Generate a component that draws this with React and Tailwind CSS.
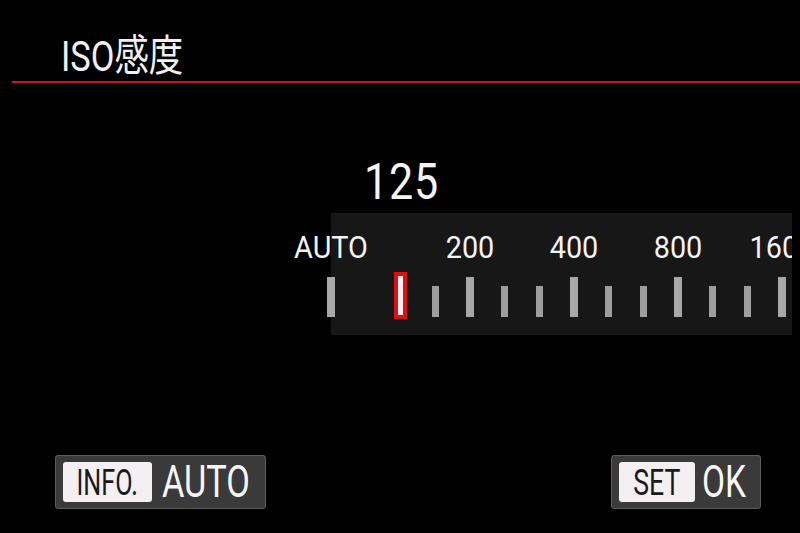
import React from 'react';

const font = { fontFamily: 'Roboto, "Noto Sans CJK JP", sans-serif' };

// ISO stops on the scale, tall = labelled stop
const stops = [
  { label: 'AUTO', tall: true },
  { hidden: true },
  { current: true },
  {},
  { label: '200', tall: true },
  {},
  {},
  { label: '400', tall: true },
  {},
  {},
  { label: '800', tall: true },
  {},
  {},
  { label: '1600', tall: true },
];

function Tick({ stop }) {
  if (stop.hidden) return <div className="w-[34.7px] shrink-0" />;
  if (stop.current) {
    return (
      <div className="w-[34.7px] shrink-0 flex justify-center">
        <div className="border-4 border-[#e01010] mt-[-5px]">
          <div className="w-[5px] h-[39px] bg-[#f4eef4]" />
        </div>
      </div>
    );
  }
  return (
    <div className="w-[34.7px] shrink-0 flex justify-center">
      {stop.tall ? (
        <div className="w-[8px] h-[40px] bg-[#a8a8a8]" />
      ) : (
        <div className="w-[7px] h-[31px] mt-[9px] bg-[#9e9e9e]" />
      )}
    </div>
  );
}

export default function App() {
  return (
    <div className="w-[800px] h-[533px] bg-black text-white flex flex-col overflow-hidden" style={font}>
      {/* Title */}
      <div className="pl-[61px] pt-[32px] h-[81px]">
        <span className="inline-block origin-left scale-x-[0.8] text-[43px] leading-[48px] text-[#f0f0f0]">ISO感度</span>
      </div>
      <div className="ml-[12px] h-[2px] bg-[#d01515]" />

      {/* Current value */}
      <div className="mt-[74px] ml-[364px] h-[56px]">
        <span className="inline-block origin-left scale-x-[0.86] text-[50px] leading-[50px] text-[#f4f4f4] tracking-[1px]">125</span>
      </div>

      {/* Scale */}
      <div className="w-[792px] overflow-hidden h-[122px]">
        <div className="ml-[331px] h-full bg-[#171717]">
          <div className="-ml-[17.35px] flex flex-col">
            <div className="flex h-[64px] pt-[18px]">
              {stops.map((s, i) => (
                <div key={i} className="w-[34.7px] shrink-0 flex justify-center overflow-visible">
                  {s.label && (
                    <span className="inline-block scale-x-[0.9] text-[32px] leading-[32px] whitespace-nowrap text-[#f2f2f2]">{s.label}</span>
                  )}
                </div>
              ))}
            </div>
            <div className="flex">
              {stops.map((s, i) => (
                <Tick key={i} stop={s} />
              ))}
            </div>
          </div>
        </div>
      </div>

      {/* Bottom buttons */}
      <div className="mt-auto mb-[24px] flex justify-between pl-[55px] pr-[39px]">
        <div className="flex items-center h-[54px] w-[211px] bg-[#3a3a3a] border border-[#5c5c5c] rounded-[3px] pl-[7px]">
          <div className="w-[89px] h-[40px] bg-[#f3eff3] rounded-[3px] flex items-center justify-center">
            <span className="inline-block scale-x-[0.68] text-[37px] leading-none text-[#1a1a1a]">INFO.</span>
          </div>
          <span className="ml-[10px] inline-block origin-left scale-x-[0.78] text-[44px] leading-none text-[#f6f6f6]">AUTO</span>
        </div>
        <div className="flex items-center h-[54px] w-[150px] bg-[#3a3a3a] border border-[#5c5c5c] rounded-[3px] pl-[7px]">
          <div className="w-[78px] h-[40px] bg-[#f3eff3] rounded-[3px] flex items-center justify-center">
            <span className="inline-block scale-x-[0.72] text-[37px] leading-none text-[#1a1a1a]">SET</span>
          </div>
          <span className="ml-[7px] inline-block origin-left scale-x-[0.76] text-[44px] leading-none text-[#f6f6f6]">OK</span>
        </div>
      </div>
    </div>
  );
}
